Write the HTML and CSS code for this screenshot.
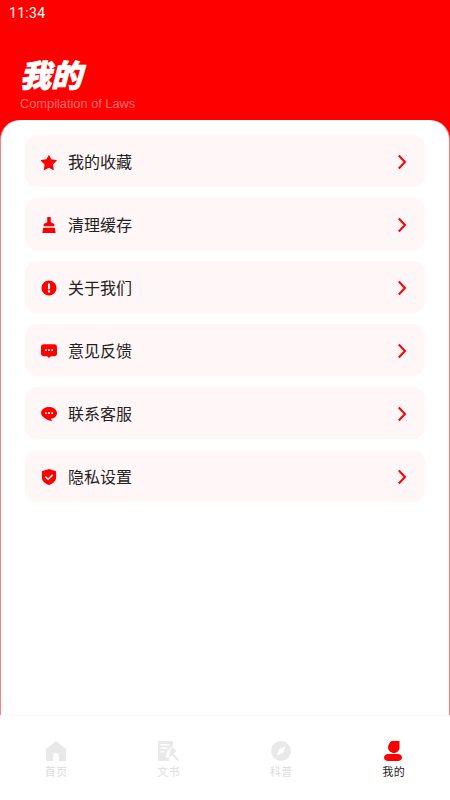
FILE: index.html
```html
<!DOCTYPE html>
<html>
<head>
  <meta charset="UTF-8">
  <title>我的</title>
  <meta name="viewport" content="width=device-width, initial-scale=1">
  <link rel="stylesheet" href="styles.css">
</head>
<body>

  <div class="app">
    <div class="header">
      <div class="time">11:34</div>
      <h1 class="title">我的</h1>
      <div class="subtitle">Compilation of Laws</div>
    </div>

    <div class="sheet">
      <div class="row">
        <svg class="row-icon" viewBox="0 0 18 18"><path d="M9 .8l2.500 5.200 5.700.8c.5.1.7.7.3 1l-4.100 4 1 5.600c.1.5-.4.9-.9.6L9 15.400 4 18c-.5.3-1-.1-.9-.6l1-5.600-4.100-4c-.4-.3-.2-.9.3-1L6 6z"/></svg>
        <span class="row-label">我的收藏</span>
        <svg class="chevron" viewBox="0 0 10 16"><path d="M1.800 1.500L8 8l-6.200 6.500"/></svg>
      </div>
      <div class="row">
        <svg class="row-icon" viewBox="0 0 18 18"><path d="M7 0h4v6l4 2v2.500H3V8l4-2zM2.500 12h13l1 6h-15z"/></svg>
        <span class="row-label">清理缓存</span>
        <svg class="chevron" viewBox="0 0 10 16"><path d="M1.800 1.500L8 8l-6.200 6.500"/></svg>
      </div>
      <div class="row">
        <svg class="row-icon" viewBox="0 0 18 18"><path fill-rule="evenodd" d="M9 .5a8.500 8.500 0 1 1 0 17 8.500 8.500 0 0 1 0-17zM7.800 4v6.500h2.400V4zM7.800 11.500V14h2.400v-2.500z"/></svg>
        <span class="row-label">关于我们</span>
        <svg class="chevron" viewBox="0 0 10 16"><path d="M1.800 1.500L8 8l-6.200 6.500"/></svg>
      </div>
      <div class="row">
        <svg class="row-icon" viewBox="0 0 18 18"><path fill-rule="evenodd" d="M3 1.500h12c1.500 0 3 1.200 3 3v7.500c0 1.500-1.500 2.800-3 2.800h-4L9 17l-2-2.200H3c-1.500 0-3-1.300-3-2.800V4.500c0-1.800 1.500-3 3-3zM4.500 7v2h2V7zM8 7v2h2V7zM11.500 7v2h2V7z"/></svg>
        <span class="row-label">意见反馈</span>
        <svg class="chevron" viewBox="0 0 10 16"><path d="M1.800 1.500L8 8l-6.200 6.500"/></svg>
      </div>
      <div class="row">
        <svg class="row-icon" viewBox="0 0 18 18"><path fill-rule="evenodd" d="M9 1c5 0 9 3 9 7 0 3.700-3.200 6.300-7 6.500l2 2.500c-3.300-.5-6-1.500-8.200-3C2 12.500 0 10.500 0 8c0-4 4-7 9-7zM4.500 7v2h2V7zM8 7v2h2V7zM11.500 7v2h2V7z"/></svg>
        <span class="row-label">联系客服</span>
        <svg class="chevron" viewBox="0 0 10 16"><path d="M1.800 1.500L8 8l-6.200 6.500"/></svg>
      </div>
      <div class="row">
        <svg class="row-icon" viewBox="0 0 18 18"><path fill-rule="evenodd" d="M9 0l8 2.500v7c0 4-3.500 7-8 8.500-4.500-1.500-8-4.500-8-8.500v-7zM5.500 8L4.300 9.200l3.700 3.500 5.700-5.500-1.200-1.200L8 10.300z"/></svg>
        <span class="row-label">隐私设置</span>
        <svg class="chevron" viewBox="0 0 10 16"><path d="M1.800 1.500L8 8l-6.200 6.500"/></svg>
      </div>
    </div>

    <div class="tabbar">
      <div class="tab">
        <svg class="tab-icon" viewBox="0 0 20 20"><path fill-rule="evenodd" d="M10 0l10 8v12H13v-5c0-1.700-1.300-3-3-3s-3 1.300-3 3v5H0V8z"/></svg>
        <span>首页</span>
      </div>
      <div class="tab">
        <svg class="tab-icon tab-icon-wide" viewBox="0 0 22 20"><path d="M0 0h15v4.500L9 10.500 7.500 17 11 16v4H0zM2.500 3v1.500h9V3zM2.500 6.500V8h7V6.500zM2.500 10v1.500h4V10z"/><path d="M14.500 6l4 4-3 3 5.500 5.500-1.500 1.500-5.500-5.500-3 1.500L12 10z"/></svg>
        <span>文书</span>
      </div>
      <div class="tab">
        <svg class="tab-icon" viewBox="0 0 20 20"><path fill-rule="evenodd" d="M10 0a10 10 0 1 1 0 20 10 10 0 0 1 0-20zM14.500 5.500L8 8l-2.500 6.500L12 12z"/></svg>
        <span>科普</span>
      </div>
      <div class="tab tab-active">
        <svg class="tab-icon" viewBox="0 0 20 20"><path d="M7.500 0h8v6.500c0 3-2.500 5.500-5.500 5.500S4 9.500 4 6.500C4 4 5.500 1.500 7.500 0zM4 13h10c2 0 4 1.300 4 3.500S16 20 14 20H4c-2 0-4-1.300-4-3.500S2 13 4 13z"/></svg>
        <span>我的</span>
      </div>
    </div>
  </div>

</body>
</html>
```

FILE: styles.css
```css
* {
  box-sizing: border-box;
}
body {
  margin: 0;
  background: #ff0000;
  font-family: "Liberation Sans", "Noto Sans CJK SC", sans-serif;
}
.app {
  height: 800px;
  display: flex;
  flex-direction: column;
}
.header {
  height: 120px;
  padding: 5px 0 0 20px;
}
.time {
  margin-left: -11px;
  height: 16px;
  font-family: Roboto, sans-serif;
  font-size: 14px;
  line-height: 16px;
  letter-spacing: 0.3px;
  color: #fff;
}
.title {
  margin: 35px 0 0;
  height: 36px;
  font-family: "Noto Sans CJK SC", sans-serif;
  font-size: 31px;
  line-height: 36px;
  font-weight: 900;
  font-style: italic;
  color: #fff;
  -webkit-text-stroke: 0.8px #fff;
}
.subtitle {
  margin-top: 4px;
  font-size: 12.8px;
  line-height: 15px;
  color: #ff7070;
}
.sheet {
  flex: 1;
  display: flex;
  flex-direction: column;
  gap: 11px;
  padding: 15px 24px 0;
  background: #fff;
  border-left: 1px solid #ff7f7f;
  border-right: 1px solid #ff7f7f;
  border-radius: 20px 20px 0 0;
}
.row {
  height: 52px;
  display: flex;
  align-items: center;
  padding: 0 18px 0 16px;
  background: #fef6f7;
  border-radius: 12px;
}
.row-icon {
  width: 16px;
  height: 16px;
  margin-top: 1px;
  fill: #ff0000;
}
.row-label {
  flex: 1;
  margin-left: 11px;
  font-family: "Noto Sans CJK SC", sans-serif;
  font-size: 16px;
  color: #222;
}
.chevron {
  width: 10px;
  height: 16px;
  margin-top: 1px;
  fill: none;
  stroke: #ff0000;
  stroke-width: 2;
}
.tabbar {
  height: 85px;
  display: flex;
  padding-top: 25px;
  background: #fff;
  border-top: 1px solid #f7f7f7;
}
.tab {
  flex: 1;
  display: flex;
  flex-direction: column;
  align-items: center;
  font-family: "Noto Sans CJK SC", sans-serif;
  font-size: 11px;
  line-height: 16px;
  letter-spacing: 0.5px;
  color: #dcdcdc;
}
.tab-icon {
  height: 20px;
  width: 20px;
  margin-bottom: 2px;
  fill: #e9e9e9;
}
.tab-icon-wide {
  width: 22px;
}
.tab-active {
  color: #222;
}
.tab-active .tab-icon {
  fill: #ff0000;
}
```
